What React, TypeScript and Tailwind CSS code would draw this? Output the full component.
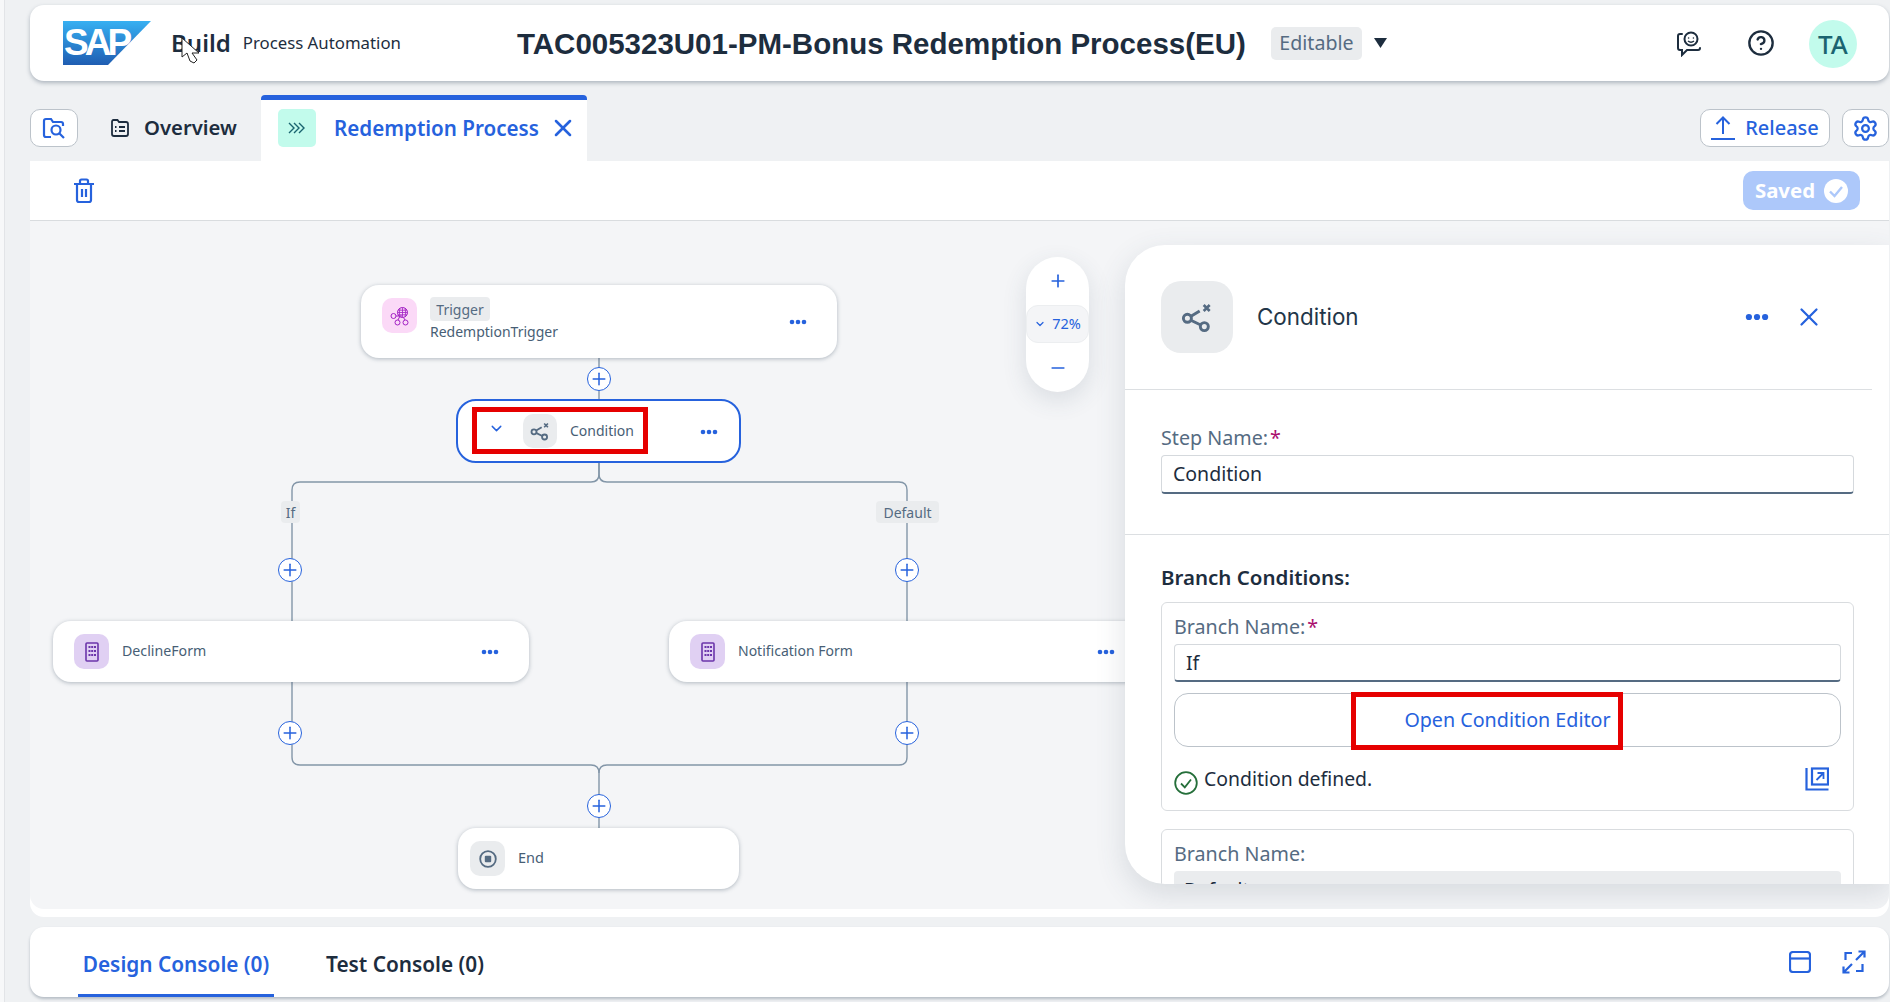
import React from "react";
import { CircleHelp, Settings, Plus, Minus, ChevronDown, X } from "lucide-react";

const Dots = ({ className = "" }: { className?: string }) => (
  <svg width="18" height="6" viewBox="0 0 18 6" className={className} fill="#2662dd">
    <circle cx="3" cy="3" r="2.3" />
    <circle cx="9" cy="3" r="2.3" />
    <circle cx="15" cy="3" r="2.3" />
  </svg>
);

const CondIcon = ({ size = 24 }: { size?: number }) => (
  <svg width={size} height={size} viewBox="0 0 24 24" fill="none" stroke="#556b82" strokeWidth="2.2">
    <circle cx="4.8" cy="13" r="3" />
    <circle cx="17.5" cy="19.2" r="3" />
    <path d="M7.5 11.5 L14 7.5 M7.8 14.6 L14.8 18" />
    <path d="M17 3 L21.5 7.5 M21.5 3 L17 7.5" strokeWidth="2" />
  </svg>
);

const FormIcon = () => (
  <svg width="14" height="20" viewBox="0 0 14 20" fill="none">
    <rect x="1" y="1" width="12" height="18" rx="1" stroke="#6b35ab" strokeWidth="1.6" />
    <g fill="#6b35ab">
      <rect x="3.5" y="4" width="2" height="2" /><rect x="6.2" y="4" width="2" height="2" /><rect x="9" y="4" width="2" height="2" />
      <rect x="3.5" y="8" width="2" height="2" /><rect x="6.2" y="8" width="2" height="2" /><rect x="9" y="8" width="2" height="2" />
      <rect x="3.5" y="12" width="2" height="2" /><rect x="6.2" y="12" width="2" height="2" /><rect x="9" y="12" width="2" height="2" />
    </g>
  </svg>
);

const TriggerIcon = () => (
  <svg width="20" height="20" viewBox="0 0 20 20" fill="none" stroke="#a21fc4" strokeWidth="1">
    <circle cx="3.5" cy="10" r="2.5" />
    <circle cx="7.5" cy="16.5" r="2.5" />
    <circle cx="15.5" cy="16.5" r="2.5" />
    <circle cx="12.5" cy="6.5" r="5" />
    <path d="M7.5 6.5 H17.5 M8 4.2 H17 M8 8.8 H17 M12.5 1.5 V11.5 M10 2 Q8.8 6.5 10 11 M15 2 Q16.2 6.5 15 11" strokeWidth=".8" />
    <path d="M6 10 H12 M9.5 11 L8 14 M13.5 11.5 L15 14" />
  </svg>
);

const PlusBtn = ({ className }: { className: string }) => (
  <div className={`absolute flex h-6 w-6 items-center justify-center rounded-full border border-[#2662dd] bg-white ${className}`}>
    <Plus size={20} strokeWidth={1.8} color="#2662dd" />
  </div>
);

const IconBox = ({ className, children }: { className: string; children: React.ReactNode }) => (
  <div className={`flex h-[35px] w-[35px] shrink-0 items-center justify-center rounded-[10px] ${className}`}>{children}</div>
);

const nodeCls = "absolute flex items-center rounded-[18px] bg-white shadow-[0_1px_4px_rgba(50,70,90,0.35)]";

export default function App() {
  return (
    <div className="flex h-[1002px] w-[1890px] overflow-hidden bg-[#eff1f3] font-['Noto_Sans',sans-serif] text-[#1d2d3e]">
      <div className="h-full w-[5px] shrink-0 border-r border-[#e2e4e7] bg-[#f7f8f9]" />
      <div className="flex min-w-0 flex-1 flex-col pl-[25px] pr-px pt-[5px]">
        {/* Header */}
        <header className="relative flex h-[76px] shrink-0 items-center rounded-[14px] bg-white pl-[33px] shadow-[0_2px_4px_rgba(50,70,90,0.35)]">
          <div className="relative h-[44px] w-[88px] shrink-0 overflow-hidden">
            <svg width="88" height="44" viewBox="0 0 88 44" className="absolute inset-0">
              <defs>
                <linearGradient id="sapg" x1="0" y1="0" x2="0" y2="1">
                  <stop offset="0" stopColor="#37b0f2" />
                  <stop offset="1" stopColor="#1f5db2" />
                </linearGradient>
              </defs>
              <polygon points="0,0 88,0 45,44 0,44" fill="url(#sapg)" />
            </svg>
            <span className="absolute left-[1px] top-[2px] font-['Liberation_Sans',sans-serif] text-[37px] font-bold leading-[40px] tracking-[-4px] text-white">SAP</span>
          </div>
          <span className="ml-[20px] text-[24px] font-semibold leading-none">Build</span>
          <span className="ml-[12px] pt-[1px] text-[16.8px] leading-none">Process Automation</span>
          <h1 className="ml-[116px] w-[729px] shrink-0 whitespace-nowrap pt-[1px] font-['Liberation_Sans',sans-serif] text-[29.5px] font-bold leading-none">TAC005323U01-PM-Bonus Redemption Process(EU)</h1>
          <span className="ml-[25px] flex h-[33px] w-[91px] shrink-0 items-center justify-center rounded-[5px] bg-[#eaecee] text-[19.6px] text-[#556b82]">Editable</span>
          <svg width="13" height="10" viewBox="0 0 13 10" className="ml-[12px] shrink-0"><polygon points="0,0 13,0 6.5,10" fill="#1d2d3e" /></svg>
          <svg width="26" height="26" viewBox="0 0 26 26" fill="none" stroke="#1d2d3e" strokeWidth="2" className="absolute left-[1646px] top-[26px]">
            <path d="M6 3 H4 Q2 3 2 5 V17 Q2 19 4 19 H6 V24 L11 19 H22 Q24 19 24 17" strokeLinecap="round" />
            <circle cx="15" cy="8" r="6.5" />
            <circle cx="12.6" cy="7" r=".8" fill="#1d2d3e" stroke="none" />
            <circle cx="17.4" cy="7" r=".8" fill="#1d2d3e" stroke="none" />
            <path d="M12 10 Q15 12.5 18 10" strokeWidth="1.5" />
          </svg>
          <CircleHelp size={28} strokeWidth={2} color="#1d2d3e" className="absolute left-[1717px] top-[24px]" />
          <div className="absolute left-[1779px] top-[15px] flex h-12 w-12 items-center justify-center rounded-full bg-[#c2fbec] text-[26px] font-medium text-[#1a6470]">TA</div>
          {/* mouse pointer */}
          <svg width="20" height="27" viewBox="0 0 20 27" className="absolute left-[151px] top-[32px]">
            <path d="M1 1 V20 L6 16 L9 24 L13 26 L16 23 L11 16 H18 Z" fill="#fff" stroke="#222" strokeWidth="1" />
          </svg>
        </header>

        {/* Tabs */}
        <div className="mt-[14px] flex h-[66px] shrink-0 items-start">
          <button className="mt-[14px] flex h-[38px] w-[48px] items-center justify-center rounded-[10px] border border-[#bcc3ca] bg-white">
            <svg width="25" height="25" viewBox="0 0 25 25" fill="none" stroke="#2662dd" strokeWidth="2.2">
              <path d="M9 21 H4 Q2 21 2 19 V5 Q2 3 4 3 H9 L11 6 H19 Q21 6 21 8 V10" />
              <circle cx="14" cy="14" r="4.5" />
              <path d="M17.5 17.5 L22 22" />
            </svg>
          </button>
          <div className="ml-[32px] mt-[14px] flex h-[38px] w-[127px] shrink-0 items-center">
            <svg width="20" height="18" viewBox="0 0 20 18" fill="none" stroke="#1d2d3e" strokeWidth="1.8">
              <path d="M2 4 V15 Q2 17 4 17 H16 Q18 17 18 15 V5 Q18 3 16 3 H9 L7.5 1 H3.5 Q2 1 2 3 Z" />
              <path d="M9 8 H15 M9 12 H15 M5 8 H6.5 M5 12 H6.5" />
            </svg>
            <span className="ml-[14px] pb-[1px] text-[20.3px] font-semibold">Overview</span>
          </div>
          <div className="ml-[24px] flex h-[66px] w-[326px] items-center rounded-t-[4px] border-t-[5px] border-[#2662dd] bg-white pb-[5px] pl-[17px]">
            <div className="flex h-[38px] w-[38px] shrink-0 items-center justify-center rounded-[5px] bg-[#c2fbec]">
              <svg width="18" height="12" viewBox="0 0 18 12" fill="none" stroke="#1a6470" strokeWidth="1.4">
                <path d="M1 1 L6 6 L1 11 M6 1 L11 6 L6 11 M11 1 L16 6 L11 11" />
              </svg>
            </div>
            <span className="ml-[18px] whitespace-nowrap text-[20.6px] font-semibold text-[#2662dd]">Redemption Process</span>
            <X size={28} strokeWidth={2.2} color="#2662dd" className="ml-[10px]" />
          </div>
          <div className="ml-auto mt-[14px] flex items-center gap-[12px]">
            <button className="flex h-[38px] w-[130px] items-center justify-center gap-[10px] rounded-[10px] border border-[#bcc3ca] bg-white text-[20px] font-medium text-[#2662dd]">
              <svg width="24" height="26" viewBox="0 0 24 26" fill="none" stroke="#2662dd" strokeWidth="2"><path d="M12 19 V3 M5.5 9 L12 2.5 L18.5 9 M0 24 H24" /></svg>
              Release
            </button>
            <button className="flex h-[38px] w-[47px] items-center justify-center rounded-[10px] border border-[#bcc3ca] bg-white">
              <Settings size={27} strokeWidth={2} color="#2662dd" />
            </button>
          </div>
        </div>

        {/* Content card */}
        <div className="flex h-[756px] shrink-0 flex-col rounded-[14px] rounded-t-none bg-white pb-[8px]">
          <div className="flex h-[60px] shrink-0 items-center justify-between border-b border-[#d9dcdf] pl-[42px] pr-[29px]">
            <svg width="24" height="26" viewBox="0 0 24 26" fill="none" stroke="#2662dd" strokeWidth="2.2">
              <path d="M2 6 H22 M8 6 V3 Q8 1.5 9.5 1.5 H14.5 Q16 1.5 16 3 V6 M5 6 V22 Q5 24 7 24 H17 Q19 24 19 22 V6 M10 11 V19 M14 11 V19" />
            </svg>
            <div className="flex h-[39px] w-[117px] items-center justify-center gap-[9px] rounded-[10px] bg-[#adc8fa] text-[20.4px] font-bold text-white">
              Saved
              <svg width="24" height="24" viewBox="0 0 24 24"><circle cx="12" cy="12" r="12" fill="#fff" /><path d="M6 12.5 L10.5 17 L18 8" fill="none" stroke="#adc8fa" strokeWidth="2.4" /></svg>
            </div>
          </div>

          {/* Canvas */}
          <div className="relative min-h-0 flex-1 overflow-hidden rounded-b-[14px] bg-[#f4f5f7]">
            <svg width="1860" height="688" viewBox="30 221 1860 688" fill="none" stroke="#8396a8" strokeWidth="1.4" className="absolute left-0 top-0">
              <path d="M599 358 V399" />
              <path d="M599 463 V474 Q599 482 591 482 H300 Q292 482 292 490 V621" />
              <path d="M599 463 V474 Q599 482 607 482 H899 Q907 482 907 490 V621" />
              <path d="M292 682 V757 Q292 765 300 765 H591 Q599 765 599 773 V828" />
              <path d="M907 682 V757 Q907 765 899 765 H607 Q599 765 599 773" />
            </svg>

            <div className={`${nodeCls} left-[331px] top-[64px] h-[73px] w-[476px] pl-[21px]`}>
              <IconBox className="mt-[13px] self-start bg-[#fbd9f7]"><TriggerIcon /></IconBox>
              <div className="ml-[13px] flex flex-col items-start self-start pt-[12px]">
                <span className="flex h-[24px] w-[60px] items-center justify-center rounded-[4px] bg-[#eaecee] text-[14px] text-[#556b82]">Trigger</span>
                <span className="text-[14px] leading-[22px] text-[#475e75]">RedemptionTrigger</span>
              </div>
              <Dots className="absolute left-[428px] top-[34px]" />
            </div>

            <div className="absolute left-[426px] top-[178px] h-[64px] w-[285px] rounded-[20px] border-2 border-[#2662dd] bg-white">
              <ChevronDown size={17} strokeWidth={2} color="#2662dd" className="absolute left-[30px] top-[19px]" />
              <div className="absolute left-[65px] top-[13px] flex h-[34px] w-[34px] items-center justify-center rounded-[10px] bg-[#eaecee]">
                <CondIcon size={20} />
              </div>
              <span className="absolute left-[112px] top-[17px] text-[14px] leading-[26px] text-[#475e75]">Condition</span>
              <Dots className="absolute left-[242px] top-[28px]" />
              <div className="absolute left-[14px] top-[6px] h-[47px] w-[176px] border-[5px] border-[#e60000]" />
            </div>

            <span className="absolute left-[251px] top-[280px] flex h-[22px] w-[19px] items-center justify-center rounded-[4px] bg-[#eaecee] text-[14px] text-[#556b82]">If</span>
            <span className="absolute left-[846px] top-[280px] flex h-[22px] w-[63px] items-center justify-center rounded-[4px] bg-[#eaecee] text-[14px] text-[#556b82]">Default</span>

            <div className={`${nodeCls} left-[23px] top-[400px] h-[61px] w-[476px] pl-[21px]`}>
              <IconBox className="bg-[#e0d0f3]"><FormIcon /></IconBox>
              <span className="ml-[13px] pb-[1px] text-[14.2px] text-[#475e75]">DeclineForm</span>
              <Dots className="absolute left-[428px] top-[28px]" />
            </div>
            <div className={`${nodeCls} left-[639px] top-[400px] h-[61px] w-[476px] pl-[21px]`}>
              <IconBox className="bg-[#e0d0f3]"><FormIcon /></IconBox>
              <span className="ml-[13px] pb-[2px] text-[14px] text-[#475e75]">Notification Form</span>
              <Dots className="absolute left-[428px] top-[28px]" />
            </div>
            <div className={`${nodeCls} left-[428px] top-[607px] h-[61px] w-[281px] pl-[12px]`}>
              <IconBox className="bg-[#eaecee]">
                <svg width="18" height="18" viewBox="0 0 18 18" fill="none"><circle cx="9" cy="9" r="7.8" stroke="#556b82" strokeWidth="1.8" /><rect x="5.8" y="5.8" width="6.4" height="6.4" rx="1" fill="#556b82" /></svg>
              </IconBox>
              <span className="ml-[13px] pb-[1px] text-[14.5px] text-[#475e75]">End</span>
            </div>

            <PlusBtn className="left-[557px] top-[146px]" />
            <PlusBtn className="left-[248px] top-[337px]" />
            <PlusBtn className="left-[865px] top-[337px]" />
            <PlusBtn className="left-[248px] top-[500px]" />
            <PlusBtn className="left-[865px] top-[500px]" />
            <PlusBtn className="left-[557px] top-[573px]" />

            {/* Zoom pill */}
            <div className="absolute left-[996px] top-[36px] flex h-[135px] w-[63px] flex-col items-center rounded-full bg-white shadow-[0_8px_24px_rgba(60,80,100,0.14)]">
              <div className="flex h-[48px] items-center"><Plus size={20} strokeWidth={2} color="#2662dd" /></div>
              <div className="flex h-[38px] w-full items-center justify-center gap-[6px] rounded-[12px] border border-[#eceef0] bg-[#f4f5f7] text-[14.5px] text-[#2662dd]">
                <ChevronDown size={12} strokeWidth={2.4} />72%
              </div>
              <div className="flex flex-1 items-center"><Minus size={20} strokeWidth={2} color="#2662dd" /></div>
            </div>

            {/* Properties panel */}
            <aside className="absolute left-[1095px] top-[24px] flex h-[639px] w-[765px] flex-col overflow-hidden rounded-l-[40px] bg-white shadow-[0_10px_30px_rgba(60,80,100,0.16)]">
              <div className="mr-[18px] flex h-[145px] shrink-0 items-center border-b border-[#dcdfe2] pl-[36px]">
                <div className="flex h-[72px] w-[72px] items-center justify-center rounded-[20px] bg-[#eaecee]"><CondIcon size={32} /></div>
                <span className="ml-[24px] w-[101px] font-['Inter',sans-serif] text-[22.4px] text-[#223548]">Condition</span>
                <Dots className="ml-[390px] scale-[1.35]" />
                <X size={30} strokeWidth={1.8} color="#2662dd" className="ml-[28px]" />
              </div>
              <div className="flex h-[145px] shrink-0 flex-col border-b border-[#dcdfe2] pl-[36px] pr-[36px] pt-[34px]">
                <label className="text-[19.7px] leading-[28px] text-[#556b82]">Step Name:<span className="ml-[2px] text-[#aa0f6e]">*</span></label>
                <div className="mt-[3px] flex h-[39px] w-[693px] items-center rounded-[4px] border border-[#d5d9dd] border-b-2 border-b-[#556b82] pl-[11px] text-[19.5px]">Condition</div>
              </div>
              <div className="flex flex-col pl-[36px] pr-[36px] pt-[27px]">
                <h3 className="text-[20.5px] font-semibold leading-[30px]">Branch Conditions:</h3>
                <section className="mt-[10px] h-[209px] w-[693px] shrink-0 rounded-[6px] border border-[#d9dcdf] px-[12px] pt-[10px]">
                  <label className="block text-[19.7px] leading-[28px] text-[#556b82]">Branch Name:<span className="ml-[2px] text-[#aa0f6e]">*</span></label>
                  <div className="mt-[3px] flex h-[38px] w-[667px] items-center rounded-[4px] border border-[#d5d9dd] border-b-2 border-b-[#556b82] pl-[11px] pt-[1px] text-[19.5px]">If</div>
                  <div className="relative mt-[11px] flex h-[54px] w-[667px] items-center justify-center rounded-[14px] border border-[#bcc3ca] text-[19.7px] text-[#2662dd]">
                    Open Condition Editor
                    <div className="absolute left-[176px] top-[-2px] h-[58px] w-[272px] border-[5px] border-[#e60000]" />
                  </div>
                  <div className="mt-[21px] flex items-start">
                    <svg width="24" height="24" viewBox="0 0 24 24" fill="none" className="mt-[3px] shrink-0"><circle cx="12" cy="12" r="10.8" stroke="#256f3a" strokeWidth="1.8" /><path d="M7 12.5 L10.8 16.3 L17 8.5" stroke="#256f3a" strokeWidth="1.8" /></svg>
                    <span className="-mt-[2px] ml-[6px] text-[19.4px] leading-[26px]">Condition defined.</span>
                    <svg width="24" height="24" viewBox="0 0 24 24" fill="none" stroke="#2662dd" strokeWidth="2.2" className="-mt-[1px] ml-auto mr-[12px]">
                      <path d="M1.5 1 V22.5 H23.5" />
                      <rect x="7" y="1.5" width="16" height="16" />
                      <path d="M11.5 13 L18 6.5 M12.5 6 H18.5 V12" strokeWidth="1.8" />
                    </svg>
                  </div>
                </section>
                <section className="mt-[18px] h-[100px] w-[693px] shrink-0 rounded-[6px] border border-[#d9dcdf] px-[12px] pt-[10px]">
                  <label className="block text-[19.7px] leading-[28px] text-[#556b82]">Branch Name:</label>
                  <div className="mt-[3px] flex h-[38px] w-[667px] items-center rounded-[4px] bg-[#eaecee] pl-[10px] text-[19px]">Default</div>
                </section>
              </div>
            </aside>
          </div>
        </div>

        {/* Bottom console */}
        <div className="relative mt-[10px] flex h-[70px] shrink-0 items-stretch rounded-[14px] bg-white pl-[48px] shadow-[0_2px_3px_rgba(50,70,90,0.3)]">
          <div className="flex h-full w-[196px] items-center justify-center border-b-[3px] border-[#2662dd] pt-[8px] text-[20.8px] font-semibold text-[#2662dd]">Design Console (0)</div>
          <div className="ml-[52px] flex items-center pt-[5px] text-[20.8px] font-semibold">Test Console (0)</div>
          <svg width="22" height="22" viewBox="0 0 22 22" fill="none" stroke="#2662dd" strokeWidth="2.2" className="absolute left-[1759px] top-[24px]">
            <rect x="1" y="1" width="20" height="20" rx="3" />
            <path d="M1 7.5 H21" />
          </svg>
          <svg width="24" height="24" viewBox="0 0 24 24" fill="none" stroke="#2662dd" strokeWidth="2.2" className="absolute left-[1812px] top-[23px]">
            <path d="M10 3 H3.5 V10 M14 21 H20.5 V14" />
            <path d="M14 10 L22.5 1.5 M16.5 1.5 H22.5 V7.5 M10 14 L1.5 22.5 M1.5 16.5 V22.5 H7.5" />
          </svg>
        </div>
      </div>
    </div>
  );
}
